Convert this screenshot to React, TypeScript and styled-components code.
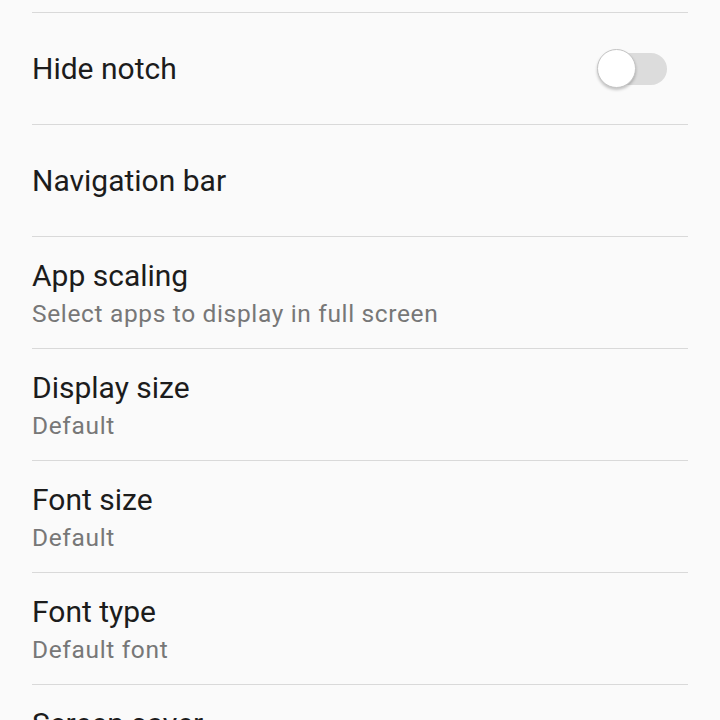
import React, { useState } from 'react'
import styled, { createGlobalStyle } from 'styled-components'

const GlobalStyle = createGlobalStyle`
  html, body {
    margin: 0;
    padding: 0;
    background: #fafafa;
    overflow: hidden;
  }
  body {
    font-family: Roboto, 'Liberation Sans', sans-serif;
  }
`

const Screen = styled.div`
  width: 720px;
  height: 720px;
  overflow: hidden;
  background: #fafafa;
`

const List = styled.div`
  display: flex;
  flex-direction: column;
  padding: 12px 32px 0;
`

const Row = styled.div`
  display: flex;
  align-items: center;
  justify-content: space-between;
  min-height: 111px;
  border-top: 1px solid #d9d9d9;
  padding-right: 21px;
`

const TextBlock = styled.div<{ $twoLine: boolean }>`
  display: flex;
  flex-direction: column;
  padding-top: ${(p) => (p.$twoLine ? '3px' : '0')};
`

const Title = styled.div`
  font-size: 30px;
  line-height: 34px;
  color: #1c1c1c;
`

const Subtitle = styled.div`
  margin-top: 6px;
  font-size: 24.5px;
  line-height: 30px;
  color: #777777;
  letter-spacing: 0.65px;
`

const Track = styled.button<{ $on: boolean }>`
  position: relative;
  width: 68px;
  height: 32px;
  padding: 0;
  border: none;
  border-radius: 16px;
  background: ${(p) => (p.$on ? '#8fb4e8' : '#dcdcdc')};
  cursor: pointer;
`

const Knob = styled.span<{ $on: boolean }>`
  position: absolute;
  top: -4px;
  left: ${(p) => (p.$on ? '30px' : '-2px')};
  width: 39px;
  height: 39px;
  box-sizing: border-box;
  border-radius: 50%;
  background: #ffffff;
  border: 1px solid #c4c4c4;
  box-shadow: 0 2px 3px rgba(0, 0, 0, 0.22);
  transition: left 0.15s;
`

type Item = {
  title: string
  subtitle?: string
  toggle?: boolean
}

const ITEMS: Item[] = [
  { title: 'Hide notch', toggle: true },
  { title: 'Navigation bar' },
  { title: 'App scaling', subtitle: 'Select apps to display in full screen' },
  { title: 'Display size', subtitle: 'Default' },
  { title: 'Font size', subtitle: 'Default' },
  { title: 'Font type', subtitle: 'Default font' },
  { title: 'Screen saver', subtitle: 'Colours' },
]

function Switch() {
  const [on, setOn] = useState(false)
  return (
    <Track $on={on} aria-label="toggle" onClick={() => setOn(!on)}>
      <Knob $on={on} />
    </Track>
  )
}

export default function App() {
  return (
    <Screen>
      <GlobalStyle />
      <List>
        {ITEMS.map((item) => (
          <Row key={item.title}>
            <TextBlock $twoLine={!!item.subtitle}>
              <Title>{item.title}</Title>
              {item.subtitle && <Subtitle>{item.subtitle}</Subtitle>}
            </TextBlock>
            {item.toggle && <Switch />}
          </Row>
        ))}
      </List>
    </Screen>
  )
}
